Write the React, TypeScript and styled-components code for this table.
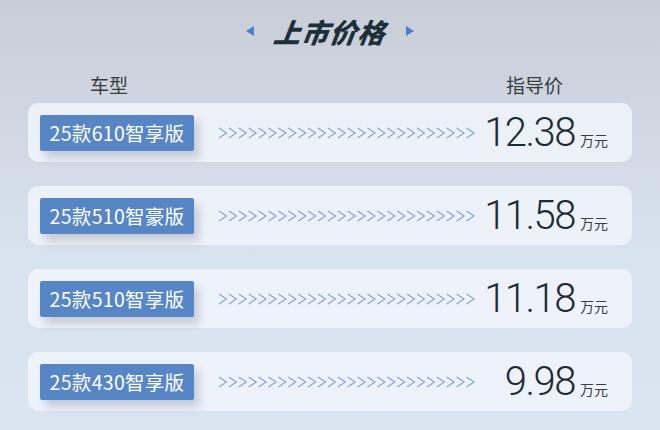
import React from "react";
import styled, { createGlobalStyle } from "styled-components";

const GlobalStyle = createGlobalStyle`
  html, body {
    margin: 0;
    padding: 0;
  }
  body {
    font-family: "Noto Sans", "Noto Sans CJK SC", sans-serif;
  }
`;

const Page = styled.div`
  width: 660px;
  height: 430px;
  overflow: hidden;
  box-sizing: border-box;
  padding: 0 28px;
  background: linear-gradient(180deg, #c8ced8 0%, #d0d8e3 30%, #d8e3f0 60%, #dae5f2 100%);
  display: flex;
  flex-direction: column;
`;

const TitleBar = styled.div`
  height: 62px;
  display: flex;
  align-items: center;
  justify-content: center;
  gap: 20px;
`;

const Title = styled.h1`
  margin: 0;
  font-family: "Noto Sans CJK SC", sans-serif;
  font-size: 27px;
  font-weight: 900;
  font-style: italic;
  letter-spacing: 1px;
  color: #1d2f38;
  transform: skewX(-8deg);
`;

const Arrow = styled.span<{ $dir: "left" | "right" }>`
  width: 0;
  height: 0;
  border-top: 5px solid transparent;
  border-bottom: 5px solid transparent;
  ${({ $dir }) =>
    $dir === "left"
      ? "border-right: 8px solid #4a80cc;"
      : "border-left: 8px solid #4a80cc;"}
`;

const HeaderRow = styled.div`
  height: 41px;
  display: flex;
  align-items: flex-start;
  justify-content: space-between;
  padding: 9px 69px 0 62px;
  box-sizing: border-box;
  font-family: "Noto Sans CJK SC", sans-serif;
  font-size: 19px;
  line-height: 28px;
  color: #3a3d42;
`;

const List = styled.div`
  display: flex;
  flex-direction: column;
  gap: 24px;
`;

const Card = styled.div`
  height: 59px;
  width: 604px;
  box-sizing: border-box;
  border-radius: 10px;
  background: rgba(240, 244, 250, 0.88);
  display: flex;
  align-items: center;
  padding: 0 24px 0 12px;
`;

const Model = styled.div`
  width: 154px;
  height: 36px;
  flex-shrink: 0;
  border-radius: 2px;
  background: #5786c6;
  color: #fff;
  font-family: "Noto Sans CJK SC", sans-serif;
  font-size: 19.5px;
  letter-spacing: 0.3px;
  display: flex;
  align-items: center;
  justify-content: center;
  box-shadow: 5px 7px 8px rgba(60, 70, 90, 0.22);
`;

const ChevronStrip = styled.svg`
  margin-left: 24px;
  flex-shrink: 0;
  display: block;
`;

const Price = styled.div`
  flex: 1;
  display: flex;
  align-items: baseline;
  justify-content: flex-end;
  gap: 5px;
`;

const Amount = styled.span`
  font-family: Roboto, sans-serif;
  font-size: 40px;
  font-weight: 300;
  letter-spacing: -1.5px;
  color: #1d2c34;
  line-height: 1;
`;

const Unit = styled.span`
  font-family: "Noto Sans CJK SC", sans-serif;
  font-size: 14px;
  color: #3a3d42;
`;

const rows = [
  { model: "25款610智享版", price: "12.38" },
  { model: "25款510智豪版", price: "11.58" },
  { model: "25款510智享版", price: "11.18" },
  { model: "25款430智享版", price: "9.98" },
];

const Chevrons = () => (
  <ChevronStrip width={260} height={12} viewBox="0 0 260 12">
    {Array.from({ length: 26 }, (_, i) => {
      const x = 1 + i * 9.9;
      return (
        <polyline
          key={i}
          points={`${x},1 ${x + 7.5},6 ${x},11`}
          fill="none"
          stroke="#80a2d8"
          strokeWidth={1.1}
        />
      );
    })}
  </ChevronStrip>
);

export default function App() {
  return (
    <>
      <GlobalStyle />
      <Page>
        <TitleBar>
          <Arrow $dir="left" />
          <Title>上市价格</Title>
          <Arrow $dir="right" />
        </TitleBar>
        <HeaderRow>
          <span>车型</span>
          <span>指导价</span>
        </HeaderRow>
        <List>
          {rows.map((r) => (
            <Card key={r.model}>
              <Model>{r.model}</Model>
              <Chevrons />
              <Price>
                <Amount>{r.price}</Amount>
                <Unit>万元</Unit>
              </Price>
            </Card>
          ))}
        </List>
      </Page>
    </>
  );
}
